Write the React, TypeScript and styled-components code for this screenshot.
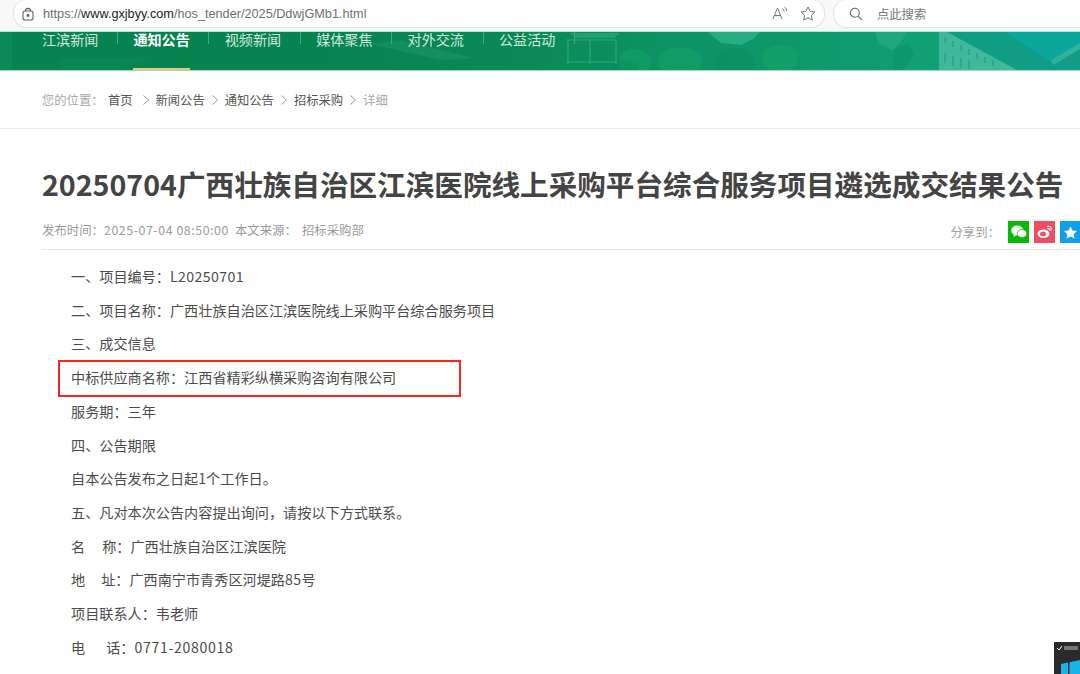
import React from "react";
import styled, { createGlobalStyle } from "styled-components";

const CJK = `"Noto Sans CJK SC", "Liberation Sans", sans-serif`;

const Global = createGlobalStyle`
  html, body { margin: 0; padding: 0; background: #fff; }
  body { width: 1080px; height: 674px; overflow: hidden; font-family: ${CJK}; }
`;

const Page = styled.div`
  position: relative;
  width: 1080px;
  height: 674px;
  overflow: hidden;
  background: #fff;
  display: flex;
  flex-direction: column;
`;

const Chrome = styled.div`
  height: 32px;
  flex: none;
  box-sizing: border-box;
  background: #f8f8f8;
  display: flex;
  gap: 8px;
  padding-left: 13px;
  align-items: flex-start;
`;

const Pill = styled.div<{ $w: number }>`
  width: ${(p) => p.$w}px;
  flex: none;
  height: 29px;
  box-sizing: border-box;
  background: #fff;
  border: 1px solid #e2e2e2;
  border-top-color: #ececec;
  border-radius: 14px;
  margin-top: -1px;
  display: flex;
  align-items: center;
`;

const Url = styled.span`
  font-family: "Liberation Sans", sans-serif;
  font-size: 12.7px;
  color: #6f6f6f;
  margin-left: 8px;
  flex: 1;
  b { font-weight: 400; color: #222; }
`;

const Lock = styled.svg`
  margin-left: 7px;
  flex: none;
`;

const PillIcon = styled.svg<{ $mr?: number; $ml?: number }>`
  flex: none;
  margin-right: ${(p) => p.$mr ?? 0}px;
  margin-left: ${(p) => p.$ml ?? 0}px;
`;

const SearchHint = styled.span`
  font-size: 12.3px;
  color: #777;
  margin-left: 14px;
`;

const Banner = styled.div`
  position: relative;
  height: 38px;
  flex: none;
  background: linear-gradient(90deg, #07834f 0%, #07834f 30%, #0a8a58 50%, #0d9264 60%, #0f9c6e 80%, #10a172 86%);
  border-top: 1px solid #b9e2d3;
  border-bottom: 1px solid #9fd9c4;
  margin-top: -1px;
`;

const Scenery = styled.svg`
  position: absolute;
  inset: 0;
`;

const Nav = styled.nav`
  position: relative;
  display: flex;
  padding-left: 42px;
  margin-top: -1px;
`;

const NavItem = styled.div<{ $on?: boolean }>`
  position: relative;
  box-sizing: border-box;
  width: 91.4px;
  height: 39px;
  flex: none;
  font-size: 14.1px;
  line-height: 16px;
  color: ${(p) => (p.$on ? "#fff" : "#cfeadd")};
  font-weight: ${(p) => (p.$on ? 700 : 400)};
  &::after {
    content: "";
    display: ${(p) => (p.$on ? "block" : "none")};
    position: absolute;
    left: 0;
    bottom: 0;
    width: 57px;
    height: 2px;
    background: #e3c777;
  }
  &::before {
    content: "";
    position: absolute;
    left: 75px;
    top: 1px;
    width: 1px;
    height: 12px;
    background: #46a67f;
  }
`;

const Crumbs = styled.div`
  height: 58px;
  flex: none;
  box-sizing: border-box;
  border-bottom: 1px solid #ebebeb;
  padding: 0 0 0 42px;
  display: flex;
  align-items: center;
  font-size: 12.3px;
  color: #555;
  white-space: nowrap;
`;

const CrumbLead = styled.span`
  color: #a8a8a8;
  width: 66px;
`;

const CrumbHome = styled.span`
  width: 27.500px;
`;

const Sep = styled.svg`
  margin: 0 4px 0 4px;
  flex: none;
`;

const Detail = styled.span`
  color: #a8a8a8;
`;

const Title = styled.h1`
  margin: 35px 0 0 42px;
  font-size: 28.6px;
  line-height: 40px;
  font-weight: 700;
  color: #444;
  white-space: nowrap;
`;

const Meta = styled.div`
  margin: 16px -1px 0 42px;
  height: 29px;
  border-bottom: 1px solid #e6e6e6;
  display: flex;
  align-items: flex-start;
  font-size: 12.4px;
  line-height: 20px;
  color: #9a9a9a;
  white-space: nowrap;
`;

const Stamp = styled.span`
  letter-spacing: 0.55px;
  margin-right: 6px;
`;

const SourceValue = styled.span`
  margin-left: 5px;
`;

const Share = styled.div`
  margin-left: auto;
  display: flex;
  align-items: center;
  gap: 5px;
  margin-top: 1px;
`;

const ShareLabel = styled.span`
  margin-right: 3px;
  color: #a0a0a0;
`;

const ShareBtn = styled.div<{ $bg: string }>`
  width: 21px;
  height: 22px;
  background: ${(p) => p.$bg};
  display: flex;
  align-items: center;
  justify-content: center;
  flex: none;
`;

const Body = styled.div`
  padding: 10px 0 0 71px;
`;

const Line = styled.p<{ $boxed?: boolean }>`
  position: relative;
  margin: 0;
  height: 33.72px;
  line-height: 33.72px;
  font-size: 14.15px;
  color: #4c4c4c;
  white-space: nowrap;
  ${(p) =>
    p.$boxed &&
    `&::after {
      content: "";
      position: absolute;
      left: -13px;
      top: -1px;
      width: 403px;
      height: 37px;
      box-sizing: border-box;
      border: 2px solid #f42a20;
    }`}
`;

const Num = styled.span<{ $ls?: number }>`
  letter-spacing: ${(p) => p.$ls ?? 0.4}px;
`;

const Gap = styled.span<{ $w: number }>`
  display: inline-block;
  width: ${(p) => p.$w}px;
`;

const Tray = styled.div`
  position: absolute;
  right: 0;
  bottom: 0;
  width: 26px;
  height: 32px;
  background: #2a2a2c;
`;

const TrayIcon = styled.svg`
  position: absolute;
  left: 0;
  top: 0;
`;

const navs = ["江滨新闻", "通知公告", "视频新闻", "媒体聚焦", "对外交流", "公益活动"];

const Chevron = () => (
  <Sep width="12" height="12" viewBox="0 0 12 12" fill="none" stroke="#9a9a9a" strokeWidth="1">
    <path d="M3.500 1.500l5 4.500-5 4.500" />
  </Sep>
);

export default function App() {
  return (
    <Page>
      <Global />
      <Chrome>
        <Pill $w={812}>
          <Lock width="14" height="14" viewBox="0 0 14 14" fill="none" stroke="#5f5f5f" strokeWidth="1.1">
            <rect x="2" y="4" width="10" height="9" rx="2" />
            <path d="M4.500 4c0-3.500 5-3.500 5 0" />
            <circle cx="7" cy="8.500" r="0.9" fill="#5f5f5f" />
          </Lock>
          <Url>
            https://<b>www.gxjbyy.com</b>/hos_tender/2025/DdwjGMb1.html
          </Url>
          <PillIcon $mr={11} width="17" height="15" viewBox="0 0 17 15" fill="none" stroke="#777" strokeWidth="1">
            <path d="M1 13L5.500 2 10 13M2.600 9.500h5.800" />
            <path d="M10.500 2.500c1.200.8 1.600 2 1.600 3M12.500 1c1.600 1 2.200 2.600 2.200 4" />
          </PillIcon>
          <PillIcon $mr={8} width="16" height="15" viewBox="0 0 16 15" fill="none" stroke="#777" strokeWidth="1">
            <path d="M8 1l2.100 4.400 4.800.6-3.500 3.300.9 4.700L8 11.700 3.700 14l.9-4.700L1.100 6l4.800-.6z" />
          </PillIcon>
        </Pill>
        <Pill $w={270}>
          <PillIcon $ml={15} width="14" height="14" viewBox="0 0 14 14" fill="none" stroke="#666" strokeWidth="1.1">
            <circle cx="5.800" cy="5.800" r="4.500" />
            <path d="M9.200 9.200l4 4" />
          </PillIcon>
          <SearchHint>点此搜索</SearchHint>
        </Pill>
      </Chrome>
      <Banner>
        <Scenery width="1080" height="38" viewBox="0 0 1080 38">
          <path d="M370 12l70 16 34-2-74-18z" fill="#2ea775" opacity="0.3" />
          <path d="M0 0h12v38H0z" fill="#0f9a5c" opacity="0.35" />
          <path d="M60 26h90l-30 12H60z" fill="#0e9259" opacity="0.4" />
          <g fill="#12a566" opacity="0.55">
            <ellipse cx="680" cy="30" rx="22" ry="15" />
            <ellipse cx="635" cy="30" rx="16" ry="13" />
            <ellipse cx="780" cy="26" rx="18" ry="13" />
          </g>
          <g fill="#08855a" opacity="0.25">
            <ellipse cx="735" cy="30" rx="20" ry="14" />
            <ellipse cx="625" cy="36" rx="14" ry="8" />
          </g>
          <path d="M570 1h50l-6 5h-38z" fill="#3cb58d" opacity="0.45" />
          <g fill="none" stroke="#4fbd97" strokeWidth="1.200" opacity="0.5">
            <path d="M566 8h50M568 8v24M590 8v24M616 8v24M566 30h50" />
          </g>
          <path d="M708 0h52l-7 7-12 6-20-2z" fill="#3cbb95" opacity="0.6" />
          <path d="M875 0h32l-6 10-8 8-14-6z" fill="#3db596" opacity="0.4" />
          <path d="M893 18l15-6 6 10-10 16h-10z" fill="#0a8a63" opacity="0.35" />
          <path d="M939 0h141v38H939z" fill="#0f9d86" />
          <path d="M1005 0h75v18l-30 11z" fill="#0ba79c" />
          <path d="M1050 29l30-18v6l-26 16z" fill="#4dbba2" opacity="0.6" />
          <path d="M939 0h8l70 38h-78z" fill="#3fb89b" />
          <g stroke="#2d9f86" strokeWidth="2" opacity="0.7">
            <path d="M945 5v6M953 9v6M961 13v6M969 17v6M977 21v6M985 25v6M993 28v6" />
            <path d="M945 21v10M953 24v10M961 26v10M969 28v9" />
          </g>
        </Scenery>
        <Nav>
          {navs.map((n, i) => (
            <NavItem key={n} $on={i === 1}>
              {n}
            </NavItem>
          ))}
        </Nav>
      </Banner>
      <Crumbs>
        <CrumbLead>您的位置：</CrumbLead>
        <CrumbHome>首页</CrumbHome>
        <Chevron />
        <span>新闻公告</span>
        <Chevron />
        <span>通知公告</span>
        <Chevron />
        <span>招标采购</span>
        <Chevron />
        <Detail>详细</Detail>
      </Crumbs>
      <Title>20250704广西壮族自治区江滨医院线上采购平台综合服务项目遴选成交结果公告</Title>
      <Meta>
        发布时间：<Stamp>2025-07-04 08:50:00</Stamp>
        <span>
          本文来源：<SourceValue>招标采购部</SourceValue>
        </span>
        <Share>
          <ShareLabel>分享到：</ShareLabel>
          <ShareBtn $bg="#09bb07">
            <svg width="16" height="14" viewBox="0 0 16 14" fill="#fff">
              <ellipse cx="6.200" cy="5.500" rx="6" ry="5" />
              <path d="M3 9l-.5 3 3-2z" />
              <ellipse cx="11" cy="8.500" rx="4.800" ry="4" stroke="#09bb07" strokeWidth="0.8" />
            </svg>
          </ShareBtn>
          <ShareBtn $bg="#f04e60">
            <svg width="16" height="14" viewBox="0 0 16 14" fill="none">
              <ellipse cx="6.500" cy="8.800" rx="6" ry="4.300" fill="#fff" />
              <ellipse cx="6" cy="9" rx="3" ry="2.300" fill="#f04e60" />
              <path d="M10 1.500c3-1 5 1 4 4M10.500 3.500c1.500-.3 2.200.6 2 1.800" stroke="#fff" strokeWidth="1.100" />
            </svg>
          </ShareBtn>
          <ShareBtn $bg="#12a0ea">
            <svg width="15" height="15" viewBox="0 0 16 15" fill="#fff">
              <path d="M8 1l2.100 4.400 4.800.6-3.500 3.300.9 4.700L8 11.700 3.700 14l.9-4.700L1.100 6l4.800-.6z" />
            </svg>
          </ShareBtn>
        </Share>
      </Meta>
      <Body>
        <Line>一、项目编号：<Num>L20250701</Num></Line>
        <Line>二、项目名称：广西壮族自治区江滨医院线上采购平台综合服务项目</Line>
        <Line>三、成交信息</Line>
        <Line $boxed>中标供应商名称：江西省精彩纵横采购咨询有限公司</Line>
        <Line>服务期：三年</Line>
        <Line>四、公告期限</Line>
        <Line>自本公告发布之日起1个工作日。</Line>
        <Line>五、凡对本次公告内容提出询问，请按以下方式联系。</Line>
        <Line>名<Gap $w={17} />称：广西壮族自治区江滨医院</Line>
        <Line>地<Gap $w={16} />址：广西南宁市青秀区河堤路<Num>85</Num>号</Line>
        <Line>项目联系人：韦老师</Line>
        <Line>电<Gap $w={21} />话：<Num $ls={0.65}>0771-2080018</Num></Line>
      </Body>
      <Tray>
        <TrayIcon width="26" height="32" viewBox="0 0 26 32">
          <path d="M3 6l2 2 3-4" fill="none" stroke="#fff" strokeWidth="1" />
          <rect x="10" y="4" width="14" height="4" fill="#777" />
          <path d="M7 22l7-1.500V32H7zM15.500 20.200L26 18v14H15.500z" fill="#19b4ea" />
        </TrayIcon>
      </Tray>
    </Page>
  );
}
